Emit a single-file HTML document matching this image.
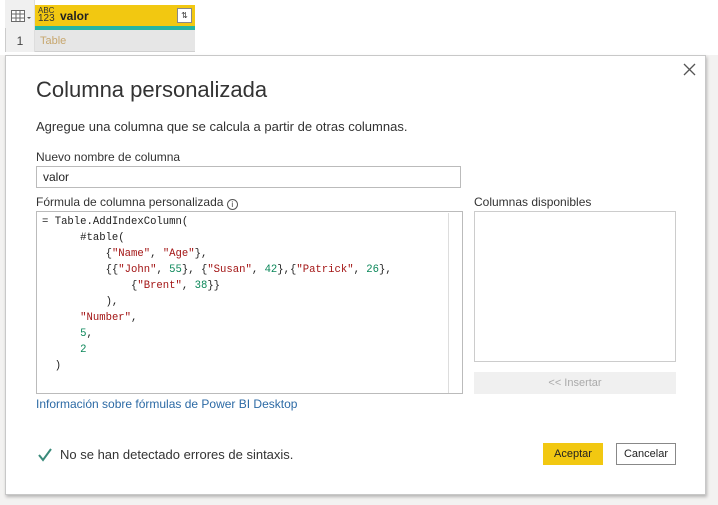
<!DOCTYPE html>
<html><head><meta charset="utf-8"><style>
*{margin:0;padding:0;box-sizing:border-box}
body{width:718px;height:505px;background:#f3f2f1;position:relative;overflow:hidden;font-family:"Liberation Sans",sans-serif;color:#333}
.a{position:absolute}
.code{font-family:"Liberation Mono",monospace;font-size:10.6px;line-height:16px;color:#222;white-space:pre}
.s{color:#a31515}.n{color:#098658}
</style></head><body>
<div class="a" style="left:0;top:0;width:718px;height:55px;background:#fff"></div>
<div class="a" style="left:5;top:0;left:5px;width:30px;height:52px;background:#f0f0f0;border-right:1px solid #ddd"></div>
<svg class="a" style="left:11px;top:10px" width="22" height="14"><rect x="0.5" y="0.5" width="13" height="11" fill="#fff" stroke="#6a6a6a"/><line x1="0" y1="4" x2="14" y2="4" stroke="#6a6a6a"/><line x1="0" y1="8" x2="14" y2="8" stroke="#6a6a6a"/><line x1="5" y1="0" x2="5" y2="12" stroke="#6a6a6a"/><line x1="9" y1="0" x2="9" y2="12" stroke="#6a6a6a"/><path d="M16 7 L20 7 L18 9Z" fill="#555"/></svg>
<div class="a" style="left:35px;top:5px;width:160px;height:21px;background:#f2c811"></div>
<div class="a" style="left:38px;top:7px;font-size:8px;line-height:8px;color:#333">ABC<br><span style="font-size:10px">123</span></div>
<div class="a" style="left:60px;top:9px;font-size:12px;font-weight:bold;color:#222">valor</div>
<div class="a" style="left:177px;top:8px;width:15px;height:15px;background:#fff;border:1px solid #888;font-size:8px;text-align:center;line-height:13px">⇅</div>
<div class="a" style="left:35px;top:26px;width:160px;height:4px;background:#26b5a0"></div>
<div class="a" style="left:5px;top:30px;width:30px;height:22px;text-align:center;font-size:12px;line-height:22px;color:#444">1</div>
<div class="a" style="left:35px;top:30px;width:160px;height:22px;background:#e6e6e6;border-bottom:1px solid #d0d0d0;font-size:11px;line-height:22px;color:#c7a76e;padding-left:5px">Table</div>
<div class="a" style="left:5px;top:28px;width:1px;height:24px;background:#ccc"></div>

<div class="a" style="left:5px;top:55px;width:701px;height:440px;background:#fff;border:1px solid #c8c8c8;box-shadow:1px 2px 3px rgba(0,0,0,.25)"></div>
<svg class="a" style="left:683px;top:63px" width="13" height="13"><path d="M1 1L12 12M12 1L1 12" stroke="#555" stroke-width="1.3"/></svg>
<div class="a" style="left:36px;top:77px;font-size:22px;color:#333">Columna personalizada</div>
<div class="a" style="left:36px;top:119px;font-size:13px;color:#333">Agregue una columna que se calcula a partir de otras columnas.</div>
<div class="a" style="left:36px;top:150px;font-size:12px;color:#333">Nuevo nombre de columna</div>
<div class="a" style="left:36px;top:166px;width:425px;height:22px;border:1px solid #bbb;font-size:12px;line-height:20px;padding-left:6px;color:#222">valor</div>
<div class="a" style="left:36px;top:195px;font-size:12px;color:#333">Fórmula de columna personalizada <span style="display:inline-block;width:11px;height:11px;border:1px solid #555;border-radius:50%;font-size:8px;line-height:9px;text-align:center;vertical-align:-1px">i</span></div>
<div class="a" style="left:36px;top:211px;width:427px;height:183px;border:1px solid #bbb"></div>
<div class="a" style="left:448px;top:213px;width:1px;height:180px;background:#ddd"></div>
<div class="a code" style="left:42px;top:214px">= Table.AddIndexColumn(
      #table(
          {<span class="s">"Name"</span>, <span class="s">"Age"</span>},
          {{<span class="s">"John"</span>, <span class="n">55</span>}, {<span class="s">"Susan"</span>, <span class="n">42</span>},{<span class="s">"Patrick"</span>, <span class="n">26</span>},
              {<span class="s">"Brent"</span>, <span class="n">38</span>}}
          ),
      <span class="s">"Number"</span>,
      <span class="n">5</span>,
      <span class="n">2</span>
  )</div>
<div class="a" style="left:36px;top:397px;font-size:12px;color:#2c6aa5">Información sobre fórmulas de Power BI Desktop</div>
<div class="a" style="left:474px;top:195px;font-size:12px;color:#333">Columnas disponibles</div>
<div class="a" style="left:474px;top:211px;width:202px;height:151px;border:1px solid #ccc"></div>
<div class="a" style="left:474px;top:372px;width:202px;height:22px;background:#f0f0f0;text-align:center;font-size:11px;line-height:22px;color:#aaa">&lt;&lt; Insertar</div>
<svg class="a" style="left:37px;top:447px" width="16" height="16"><path d="M2 8L6 13L14 2" stroke="#3a8a7a" stroke-width="2" fill="none"/></svg>
<div class="a" style="left:60px;top:447px;font-size:13px;color:#333">No se han detectado errores de sintaxis.</div>
<div class="a" style="left:543px;top:443px;width:60px;height:22px;background:#f2c811;text-align:center;font-size:11px;line-height:22px;color:#222">Aceptar</div>
<div class="a" style="left:616px;top:443px;width:60px;height:22px;border:1px solid #888;text-align:center;font-size:11px;line-height:20px;color:#222">Cancelar</div>
</body></html>
